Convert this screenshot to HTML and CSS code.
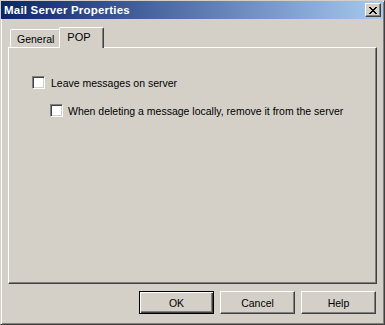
FILE: index.html
```html
<!DOCTYPE html>
<html lang="en">
<head>
<meta charset="UTF-8" />
<title>Mail Server Properties</title>
<link rel="stylesheet" href="styles.css">
</head>
<body>
<div class="window">
  <div class="titlebar">
    <span class="title">Mail Server Properties</span>
    <button class="close" aria-label="Close">
      <svg width="8" height="7" viewBox="0 0 8 7"><path d="M0 0h2v1h1v1h2v-1h1v-1h2v1h-1v1h-1v1h-1v1h1v1h1v1h1v1h-2v-1h-1v-1h-2v1h-1v1h-2v-1h1v-1h1v-1h1v-1h-1v-1h-1v-1h-1z" fill="#000"/></svg>
    </button>
  </div>
  <div class="body">
    <div class="tabs">
      <div class="tab">General</div>
      <div class="tab active">POP</div>
    </div>
    <div class="panel">
      <label class="check">
        <span class="box"></span>
        <span>Leave messages on server</span>
      </label>
      <label class="check sub">
        <span class="box"></span>
        <span>When deleting a message locally, remove it from the server</span>
      </label>
    </div>
    <div class="footer">
      <button class="btn default">OK</button>
      <button class="btn">Cancel</button>
      <button class="btn">Help</button>
    </div>
  </div>
</div>
</body>
</html>
```

FILE: styles.css
```css
:root {
  --face: #d4d0c8;
  --light: #ffffff;
  --shadow: #808080;
  --dark: #404040;
  --font: Tahoma, 'Liberation Sans', Arial, sans-serif;
}

body {
  margin: 0;
  background: var(--face);
  font-family: var(--font);
  font-size: 10.5px;
  color: #000;
}

.window {
  width: 385px;
  height: 325px;
  box-sizing: border-box;
  background: var(--face);
  border-top: 1px solid var(--face);
  border-left: 1px solid var(--face);
  border-right: 1px solid var(--dark);
  border-bottom: 1px solid var(--dark);
  box-shadow: inset 1px 1px 0 var(--light), inset -1px -1px 0 var(--shadow);
  display: flex;
  flex-direction: column;
}

.titlebar {
  height: 18px;
  margin: 0 1px 0 0;
  padding: 0 2px 0 3px;
  background: linear-gradient(to right, #0a246a, #a6caf0);
  display: flex;
  align-items: center;
  justify-content: space-between;
}

.title {
  color: #fff;
  font-weight: bold;
  font-size: 11.5px;
  letter-spacing: 0.2px;
}

.close {
  width: 16px;
  height: 14px;
  padding: 0;
  box-sizing: border-box;
  background: var(--face);
  border-top: 1px solid var(--light);
  border-left: 1px solid var(--light);
  border-right: 1px solid var(--dark);
  border-bottom: 1px solid var(--dark);
  box-shadow: inset -1px -1px 0 var(--shadow);
  display: flex;
  align-items: center;
  justify-content: center;
}

.body {
  flex: 1;
  padding: 0 7px 0 7px;
  display: flex;
  flex-direction: column;
}

.tabs {
  display: flex;
  align-items: flex-end;
  margin-top: 9px;
  padding-left: 2px;
  height: 20px;
  position: relative;
  z-index: 1;
  margin-bottom: -1px;
}

.tab {
  height: 18px;
  box-sizing: border-box;
  padding: 0 6px;
  border-top: 1px solid var(--light);
  border-left: 1px solid var(--light);
  border-right: 1px solid var(--dark);
  box-shadow: inset -1px 0 0 var(--shadow);
  border-radius: 2px 2px 0 0;
  background: var(--face);
  display: flex;
  align-items: center;
  margin-bottom: 1px;
}

.tab.active {
  height: 21px;
  margin-left: -2px;
  margin-bottom: 0;
  padding: 0 12px 2px 7px;
  font-size: 11px;
}

.panel {
  height: 237px;
  box-sizing: border-box;
  border-top: 1px solid var(--light);
  border-left: 1px solid var(--light);
  border-right: 1px solid var(--dark);
  border-bottom: 1px solid var(--dark);
  box-shadow: inset -1px -1px 0 var(--shadow);
  padding: 28px 0 0 23px;
  display: flex;
  flex-direction: column;
  gap: 15px;
}

.check {
  display: flex;
  align-items: center;
  gap: 6px;
  height: 13px;
}

.check.sub {
  margin-left: 18px;
  gap: 5px;
}

.box {
  width: 13px;
  height: 13px;
  box-sizing: border-box;
  background: #fff;
  border-top: 1px solid var(--shadow);
  border-left: 1px solid var(--shadow);
  border-right: 1px solid var(--light);
  border-bottom: 1px solid var(--light);
  box-shadow: inset 1px 1px 0 var(--dark), inset -1px -1px 0 var(--face);
}

.footer {
  display: flex;
  justify-content: flex-end;
  gap: 6px;
  margin-top: 7px;
  padding-right: 1px;
}

.btn {
  width: 75px;
  height: 23px;
  box-sizing: border-box;
  background: var(--face);
  font-family: var(--font);
  font-size: 10.5px;
  color: #000;
  padding: 0;
  border-top: 1px solid var(--light);
  border-left: 1px solid var(--light);
  border-right: 1px solid var(--dark);
  border-bottom: 1px solid var(--dark);
  box-shadow: inset -1px -1px 0 var(--shadow);
}

.btn.default {
  border: 1px solid #000;
  box-shadow: inset 1px 1px 0 var(--light), inset -1px -1px 0 var(--dark), inset -2px -2px 0 var(--shadow);
}
```
